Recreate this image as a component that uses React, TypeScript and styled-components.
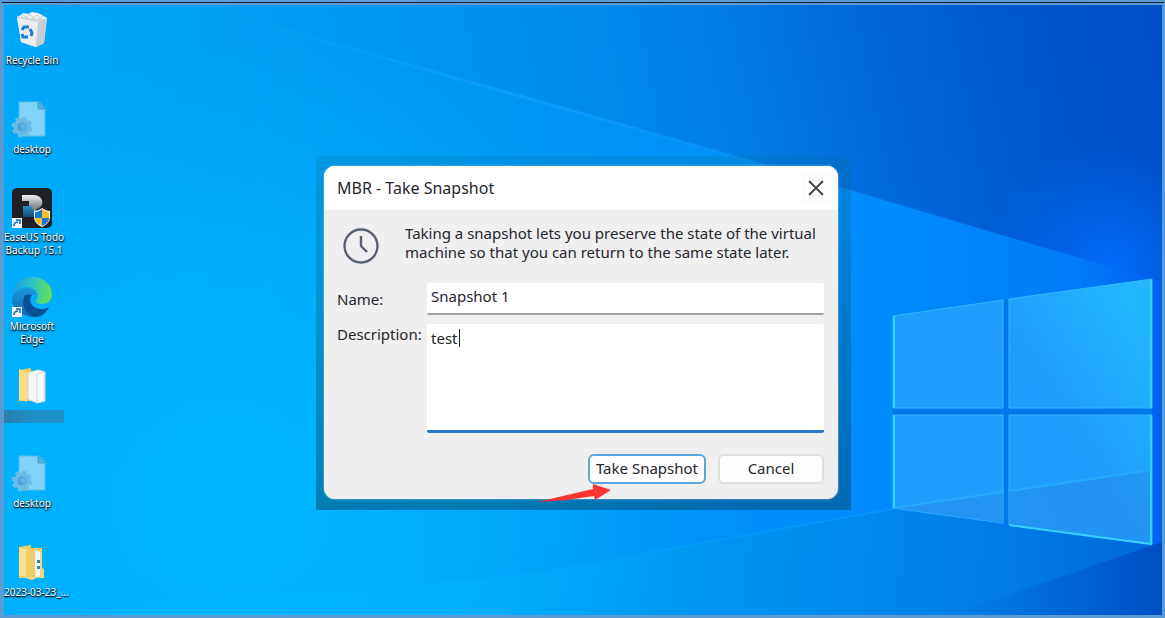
import React from "react";
import styled, { createGlobalStyle } from "styled-components";

const GlobalStyle = createGlobalStyle`
  * { box-sizing: border-box; }
  body { margin: 0; background: #fff; }
  button, input, textarea { font: inherit; color: inherit; }
`;

const Frame = styled.div`
  min-height: 100vh;
  display: flex;
  flex-direction: column;
  border: 2px solid #5b9bd5;
  border-width: 2px 1px 0 2px;
  background: #5b9bd5;
  font-family: "Noto Sans", "Open Sans", sans-serif;
`;

const Rule = styled.div`
  height: 1px;
  margin-bottom: 2px;
  background: #14202c;
`;

const Desktop = styled.main`
  position: relative;
  flex: 1;
  display: flex;
  overflow: hidden;
  border: 2px solid #5b9bd5;
  border-width: 0 2px 3px 2px;
`;

const Wallpaper = styled.svg`
  position: absolute;
  inset: 0;
  width: 100%;
  height: 100%;
`;

const IconGrid = styled.ul`
  position: relative;
  display: grid;
  grid-template-columns: 56px;
  grid-auto-rows: 89px 88px 89px;
  align-content: start;
  margin: 0;
  padding: 5px 0 0;
  height: 610px;
  list-style: none;
`;

const Shortcut = styled.li`
  display: flex;
  flex-direction: column;
  align-items: safe center;
  svg { flex: none; }
`;

const Label = styled.span`
  color: #fff;
  font-size: 10px;
  line-height: 13px;
  text-align: center;
  white-space: pre;
  text-shadow: 0 1px 1px #000, 1px 1px 2px rgba(0, 0, 0, 0.8);
`;

const MaskedLabel = styled.span`
  width: 60px;
  height: 13px;
  margin-top: 1px;
  align-self: flex-start;
  background: linear-gradient(90deg, #2a7fae, #1f8fc6 40%, #1c92cc);
`;

const Halo = styled.div`
  position: absolute;
  top: 151px;
  left: calc(50% - 267px);
  width: 535px;
  padding: 10px 13px 11px 8px;
  background: linear-gradient(180deg, rgba(0, 112, 150, 0.22), rgba(0, 62, 90, 0.45));
`;

const Dialog = styled.section`
  overflow: hidden;
  border-radius: 11px;
  background: #efefef;
  color: #26262e;
  font-size: 15px;
  box-shadow: 0 0 2px rgba(190, 225, 250, 0.9);
`;

const TitleBar = styled.header`
  display: flex;
  align-items: center;
  justify-content: space-between;
  height: 44px;
  padding: 0 8px 0 13px;
  background: #fff;
`;

const Title = styled.h1`
  margin: 0;
  font-size: 16px;
  font-weight: 400;
`;

const CloseButton = styled.button`
  display: grid;
  place-items: center;
  width: 28px;
  height: 30px;
  padding: 0;
  border: 0;
  background: #fbfcfc;
`;

const Intro = styled.div`
  display: flex;
  align-items: center;
  gap: 26px;
  padding: 12px 0 0 19px;
`;

const IntroText = styled.p`
  margin: 0;
  line-height: 19px;
  white-space: nowrap;
`;

const Form = styled.form`
  display: grid;
  grid-template-columns: 90px 1fr;
  row-gap: 9px;
  padding: 19px 14px 15px 13px;
`;

const FieldLabel = styled.label<{ $top: number }>`
  padding-top: ${(p) => p.$top}px;
  line-height: 20px;
  font-size: 15px;
`;

const NameInput = styled.input`
  width: 100%;
  height: 32px;
  padding: 0 4px 4px;
  border: 0;
  border-bottom: 2px solid #a0a0a0;
  border-radius: 2px;
  background: #fff;
  outline: 0;
`;

const TextAreaWrap = styled.div`
  position: relative;
  display: flex;
`;

const Description = styled.textarea`
  width: 100%;
  height: 109px;
  padding: 4px;
  border: 0;
  border-bottom: 3px solid #2c78c8;
  border-radius: 2px;
  background: #fff;
  line-height: 20px;
  resize: none;
  outline: 0;
  caret-color: transparent;
`;

const Caret = styled.span`
  position: absolute;
  top: 5px;
  left: 32px;
  width: 1px;
  height: 18px;
  background: #222;
`;

const Actions = styled.div`
  grid-column: 1 / -1;
  display: flex;
  justify-content: flex-end;
  gap: 12px;
  padding-top: 12px;
`;

const Button = styled.button<{ $primary?: boolean }>`
  width: ${(p) => (p.$primary ? 118 : 106)}px;
  height: 30px;
  padding: 0 0 2px;
  border: 2px solid ${(p) => (p.$primary ? "#5ea3d9" : "#dcdfdf")};
  border-radius: 6px;
  background: #fdfdfd;
  line-height: 20px;
  white-space: nowrap;
`;

const Pointer = styled.svg`
  position: absolute;
  left: 221px;
  top: 328px;
`;

function WallpaperArt() {
  return (
    <Wallpaper viewBox="4 5 1158 610" preserveAspectRatio="none" aria-hidden="true">
      <defs>
        <linearGradient id="sky" gradientUnits="userSpaceOnUse" x1="0" y1="330" x2="1165" y2="90">
          <stop offset="0" stopColor="#00aafa" />
          <stop offset=".25" stopColor="#009ff5" />
          <stop offset=".5" stopColor="#008eee" />
          <stop offset=".63" stopColor="#007ee6" />
          <stop offset=".78" stopColor="#0066d8" />
          <stop offset=".9" stopColor="#0056cc" />
          <stop offset="1" stopColor="#004ec6" />
        </linearGradient>
        <linearGradient id="beam" gradientUnits="userSpaceOnUse" x1="0" y1="0" x2="1165" y2="0">
          <stop offset="0" stopColor="#00aefe" />
          <stop offset=".3" stopColor="#00a4fa" />
          <stop offset=".55" stopColor="#0096fa" />
          <stop offset=".78" stopColor="#008afc" />
          <stop offset=".92" stopColor="#007cf6" />
          <stop offset="1" stopColor="#0060f0" />
        </linearGradient>
        <linearGradient id="floor" gradientUnits="userSpaceOnUse" x1="200" y1="500" x2="1165" y2="600">
          <stop offset="0" stopColor="#00b4ff" />
          <stop offset=".3" stopColor="#00a6fa" />
          <stop offset=".6" stopColor="#0090f0" />
          <stop offset=".85" stopColor="#0079e4" />
          <stop offset="1" stopColor="#0064d8" />
        </linearGradient>
        <linearGradient id="corner" gradientUnits="userSpaceOnUse" x1="940" y1="600" x2="1160" y2="600">
          <stop offset="0" stopColor="#006ee0" stopOpacity="0" />
          <stop offset="1" stopColor="#0050c4" />
        </linearGradient>
        <linearGradient id="edgeLight" gradientUnits="userSpaceOnUse" x1="200" y1="0" x2="1000" y2="0">
          <stop offset="0" stopColor="#18a8ff" stopOpacity="0" />
          <stop offset=".4" stopColor="#18a4ff" stopOpacity=".6" />
          <stop offset="1" stopColor="#1490ff" stopOpacity="0" />
        </linearGradient>
        <linearGradient id="beamFade" gradientUnits="userSpaceOnUse" x1="200" y1="0" x2="800" y2="0">
          <stop offset="0" stopColor="#fff" stopOpacity="0" />
          <stop offset="1" stopColor="#fff" />
        </linearGradient>
        <mask id="beamMask"><rect width="1165" height="618" fill="url(#beamFade)" /></mask>
        <radialGradient id="glow" gradientUnits="userSpaceOnUse" cx="1110" cy="270" r="130">
          <stop offset="0" stopColor="#0070ff" stopOpacity=".9" />
          <stop offset="1" stopColor="#0066f0" stopOpacity="0" />
        </radialGradient>
        <radialGradient id="lower" gradientUnits="userSpaceOnUse" cx="240" cy="500" r="460">
          <stop offset="0" stopColor="#00b6ff" />
          <stop offset=".5" stopColor="#00b4ff" stopOpacity=".7" />
          <stop offset="1" stopColor="#00b0ff" stopOpacity="0" />
        </radialGradient>
        <linearGradient id="pane" gradientUnits="userSpaceOnUse" x1="893" y1="500" x2="1152" y2="330">
          <stop offset="0" stopColor="#209eff" />
          <stop offset=".6" stopColor="#1f9cfd" />
          <stop offset="1" stopColor="#22b6ff" />
        </linearGradient>
      </defs>
      <rect width="1165" height="618" fill="url(#sky)" />
      <rect width="1165" height="618" fill="url(#glow)" />
      <path d="M190 3L733 156L1165 283V618H190Z" fill="url(#beam)" mask="url(#beamMask)" />
      <path d="M190 3L733 156L1165 283" fill="none" stroke="url(#edgeLight)" strokeWidth="3" />
      <path d="M0 618L520 575L893 509L1152 546L1165 548V618Z" fill="url(#floor)" />
      <rect width="1165" height="618" fill="url(#lower)" />
      <path d="M640 554L893 509" stroke="#12a0ff" strokeOpacity=".5" strokeWidth="2" />
      <path d="M1165 541L940 618H1165Z" fill="url(#corner)" />
      <path d="M893 408H1152V415H893ZM1003 300L1009 299V525L1003 524Z" fill="#0078ea" />
      <g fill="url(#pane)" stroke="#34b8ff" strokeWidth="1">
        <path d="M893 316L1003 300V408H893Z" />
        <path d="M1009 299L1152 279V408H1009Z" />
        <path d="M893 415H1003V523L893 508Z" />
        <path d="M1009 415H1152V544L1009 525Z" />
      </g>
      <path d="M893 508L1003 492V523ZM1009 491L1152 470V544L1009 525Z" fill="#2290f0" fillOpacity=".7" />
      <path d="M893 508L1003 492M1009 491L1152 470" stroke="#24acff" strokeWidth="2" />
      <path d="M894 408V316M894 415V508M1151 408V280M1151 415V544L1009 525" fill="none" stroke="#38d0ff" strokeWidth="2" />
    </Wallpaper>
  );
}

const ShortcutArrow = () => (
  <g>
    <rect x="1" y="31" width="10" height="10" fill="#f4f8fb" />
    <path d="M3 39C3 36 5 35 7 35M5 33H9V37" fill="none" stroke="#1a6ab8" strokeWidth="1.6" />
  </g>
);

const RecycleBin = () => (
  <svg width="42" height="44" viewBox="0 0 42 44" aria-hidden="true">
    <path d="M6 7L10 5L12 3L17 4L21 2L27 3L31 5L36 8L30 12H13Z" fill="#f0f2f3" />
    <path d="M6 7L33 9L36 8L33 33L25 37L10 32Z" fill="#e2e6ea" />
    <path d="M6 7L27 12L25 37L10 32Z" fill="#e9edf0" />
    <path d="M27 12L36 8L33 33L25 37Z" fill="#c6cdd4" />
    <path d="M12 4L15 8L19 4L22 8L26 5L29 8L32 6M10 7L18 9L25 10L31 9" fill="none" stroke="#c0c8cf" />
    <path d="M6 7L27 12L36 8" fill="none" stroke="#d0d6da" />
    <path d="M11 20L13 17L18 17M19 19L21 23L20 26M17 27L12 27L11 24" fill="none" stroke="#1c7fd0" strokeWidth="3" />
  </svg>
);

const GearFile = () => (
  <svg width="42" height="44" viewBox="0 0 42 44" aria-hidden="true">
    <path d="M8 3H28L34 9V37H8Z" fill="#80d2f8" stroke="#5cbce8" />
    <path d="M27 3V10H34Z" fill="#4fb4e2" stroke="#3da2d2" />
    <circle cx="11" cy="28" r="6" fill="none" stroke="#6abce4" strokeWidth="5" />
    <circle cx="11" cy="28" r="9" fill="none" stroke="#6abce4" strokeWidth="3" strokeDasharray="4 3.07" />
    <circle cx="11" cy="28" r="4" fill="#5cbcf0" stroke="#4a9fd0" />
    <path d="M9 25V31L12 29" fill="none" stroke="#3c90c4" />
  </svg>
);

const TodoBackup = () => (
  <svg width="42" height="44" viewBox="0 0 42 44" aria-hidden="true">
    <defs>
      <linearGradient id="letter" x1="0" y1="0" x2="0" y2="1">
        <stop offset="0" stopColor="#f2f2f2" />
        <stop offset=".5" stopColor="#8c9196" />
        <stop offset="1" stopColor="#5a6066" />
      </linearGradient>
      <linearGradient id="letterFoot" x1="0" y1="0" x2="0" y2="1">
        <stop offset="0" stopColor="#2690c4" />
        <stop offset="1" stopColor="#124a70" />
      </linearGradient>
    </defs>
    <rect x="1" y="1" width="40" height="40" rx="5" fill="#1e2026" />
    <path d="M11 8H22C34 8 34 21 25 22L31 30H24L18 20V14H11Z" fill="url(#letter)" />
    <path d="M12 19H20L26 30H12Z" fill="url(#letterFoot)" />
    <path d="M31 21C34 23 36 24 39 24V30C39 35 35 38 31 40C27 38 23 35 23 30V24C26 24 28 23 31 21Z" fill="#fff" />
    <path d="M31 22V31H24V25C27 25 29 24 31 22ZM31 31H38C38 35 34 38 31 39Z" fill="#1976d0" />
    <path d="M31 22C34 24 36 25 38 25V31H31ZM24 31H31V39C27 37 24 35 24 31Z" fill="#fbbd25" />
    <ShortcutArrow />
  </svg>
);

const Edge = () => (
  <svg width="42" height="44" viewBox="0 0 42 44" aria-hidden="true">
    <defs>
      <linearGradient id="edgeTop" x1="0" y1=".4" x2="1" y2=".5">
        <stop offset="0" stopColor="#1b9be0" />
        <stop offset=".5" stopColor="#30c4c8" />
        <stop offset="1" stopColor="#62e34c" />
      </linearGradient>
      <linearGradient id="edgeSide" x1="0" y1="0" x2="0" y2="1">
        <stop offset="0" stopColor="#1b98dc" />
        <stop offset="1" stopColor="#1262b4" />
      </linearGradient>
    </defs>
    <path d="M1 20C2 8 11 1 22 1C33 1 41 9 41 18C41 25 36 28 31 28C25 28 24 26 26 23C29 16 22 11 16 11C9 11 4 15 1 20Z" fill="url(#edgeTop)" />
    <path d="M1 21C4 15 10 12 16 12C22 12 26 16 26 20C22 17 17 20 17 27C17 35 25 40 31 38C27 41 21 42 17 40C7 38 0 30 1 21Z" fill="url(#edgeSide)" />
    <path d="M13 21C10 29 15 39 24 41C31 41 36 36 38 31C32 35 24 33 21 29C18 25 19 21 21 19C18 18 14 18 13 21Z" fill="#0c4f98" />
    <ShortcutArrow />
  </svg>
);

const Folder = ({ papers }: { papers?: boolean }) => (
  <svg width="42" height="44" viewBox="0 0 42 44" aria-hidden="true">
    <path d="M8 5L20 3V6H31V36H8Z" fill="#eec962" />
    {papers ? (
      <>
        <path d="M17 8L27 5L34 7V36L26 38L17 34Z" fill="#f4f6f7" stroke="#d8dde0" />
        <path d="M26 9L33 7V36L26 38Z" fill="#fff" stroke="#d4d9dd" />
        <path d="M8 4L16 7V37L8 34Z" fill="#fbdc85" />
      </>
    ) : (
      <>
        <path d="M24 9H31V35H24Z" fill="#f5f8fa" />
        <path d="M26 18H29V21H26ZM26 24H29V27H26Z" fill="#2e80c8" />
        <path d="M8 5L23 9L25 36L21 38L8 34Z" fill="#fbdf8c" />
        <path d="M15 7L24 9V35L15 36Z" fill="#f1cc6c" />
        <path d="M29 7H31V26L33 27V36H29Z" fill="#f6d47a" />
      </>
    )}
  </svg>
);

const shortcuts = [
  { icon: <RecycleBin />, label: "Recycle Bin" },
  { icon: <GearFile />, label: "desktop" },
  { icon: <TodoBackup />, label: "EaseUS Todo\nBackup 15.1" },
  { icon: <Edge />, label: "Microsoft\nEdge" },
  { icon: <Folder papers />, label: "" },
  { icon: <GearFile />, label: "desktop" },
  { icon: <Folder />, label: "2023-03-23_..." },
];

export default function App() {
  return (
    <Frame>
      <GlobalStyle />
      <Rule />
      <Desktop>
        <WallpaperArt />
        <IconGrid>
          {shortcuts.map((s, i) => (
            <Shortcut key={i}>
              {s.icon}
              {s.label ? <Label>{s.label}</Label> : <MaskedLabel />}
            </Shortcut>
          ))}
        </IconGrid>
        <Halo>
          <Dialog role="dialog" aria-labelledby="dialog-title">
            <TitleBar>
              <Title id="dialog-title">MBR - Take Snapshot</Title>
              <CloseButton type="button" aria-label="Close">
                <svg width="16" height="16" viewBox="0 0 16 16">
                  <path d="M1 1L15 15M15 1L1 15" stroke="#444" strokeWidth="1.8" />
                </svg>
              </CloseButton>
            </TitleBar>
            <Intro>
              <svg width="36" height="42" viewBox="0 0 36 42" aria-hidden="true">
                <circle cx="18" cy="24" r="16.5" fill="none" stroke="#585f75" strokeWidth="2.4" />
                <path d="M18 14V24L24 30" fill="none" stroke="#585f75" strokeWidth="2.4" />
              </svg>
              <IntroText>
                Taking a snapshot lets you preserve the state of the virtual
                <br />
                machine so that you can return to the same state later.
              </IntroText>
            </Intro>
            <Form onSubmit={(e) => e.preventDefault()}>
              <FieldLabel htmlFor="name" $top={6}>Name:</FieldLabel>
              <NameInput id="name" defaultValue="Snapshot 1" />
              <FieldLabel htmlFor="description" $top={0}>Description:</FieldLabel>
              <TextAreaWrap>
                <Description id="description" defaultValue="test" spellCheck={false} />
                <Caret />
              </TextAreaWrap>
              <Actions>
                <Button type="submit" $primary>Take Snapshot</Button>
                <Button type="button">Cancel</Button>
              </Actions>
            </Form>
          </Dialog>
          <Pointer width="75" height="19" viewBox="0 0 75 19" aria-hidden="true">
            <path d="M0 18L56 5V0L74 6L58 16L57 12L30 16Z" fill="#fb3434" />
          </Pointer>
        </Halo>
      </Desktop>
    </Frame>
  );
}
